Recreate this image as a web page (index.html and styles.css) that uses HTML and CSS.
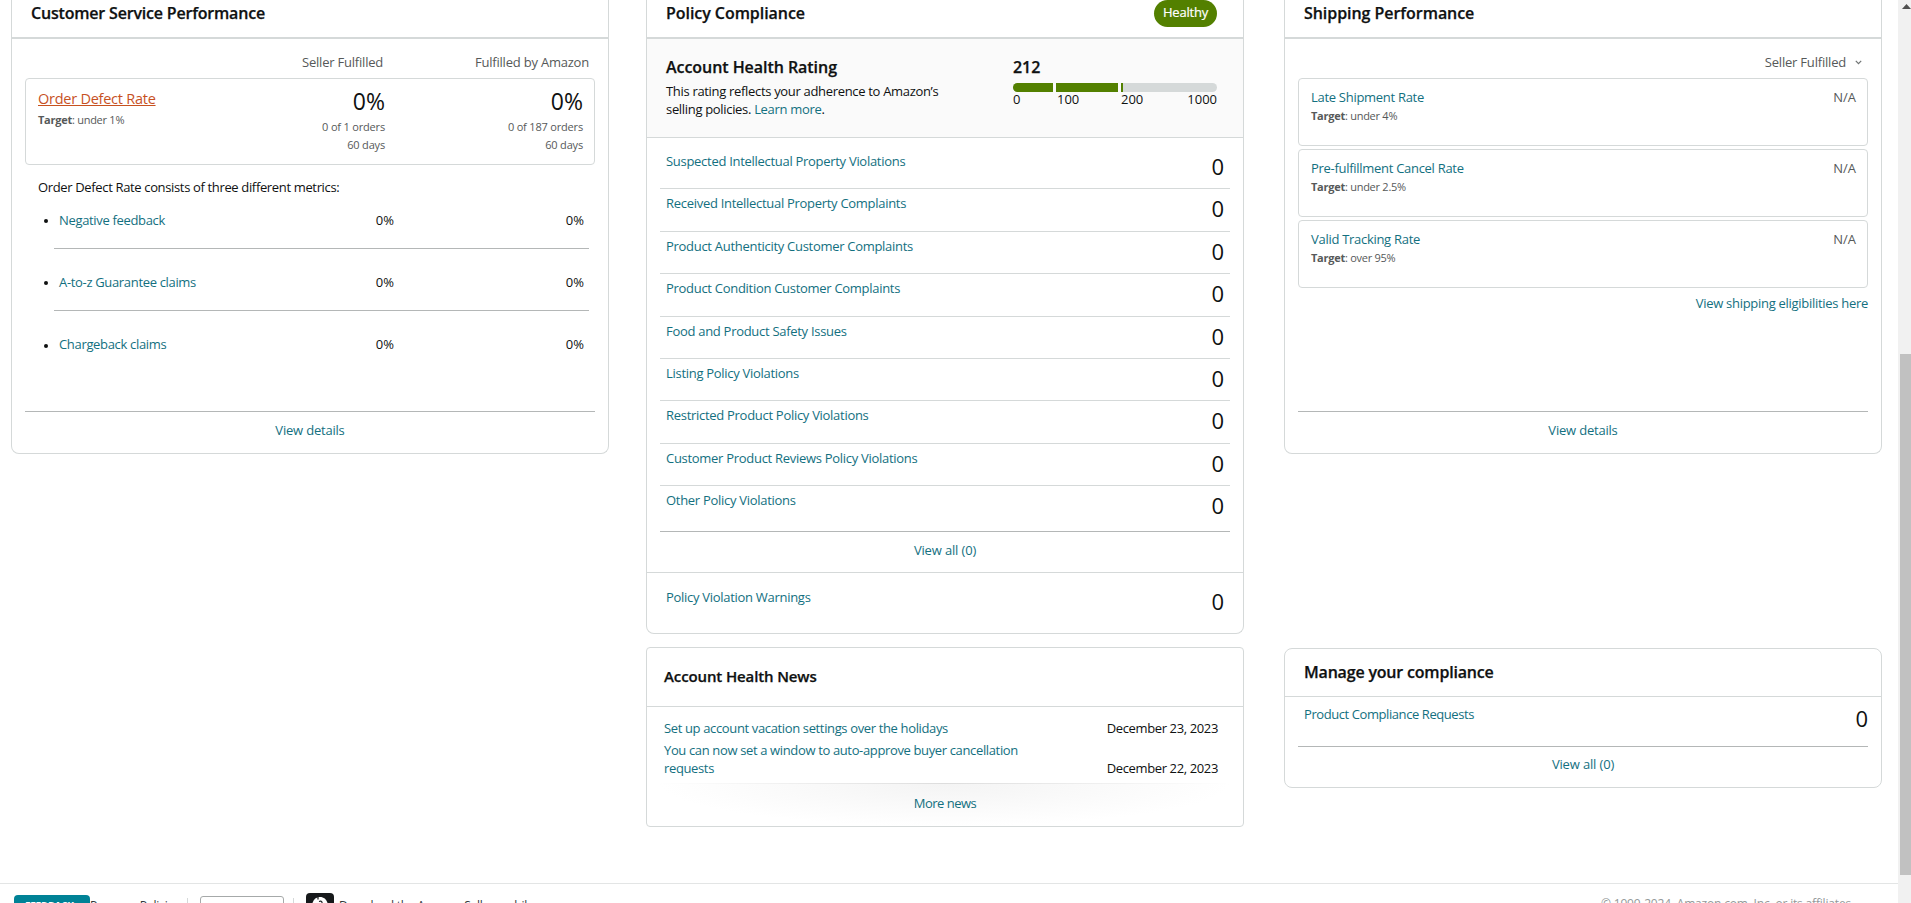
FILE: index.html
```html
<!DOCTYPE html>
<html lang="en">
<head>
<meta charset="utf-8">
<title>Account Health</title>
<link rel="stylesheet" href="styles.css">
</head>
<body>
<div class="page">
<main class="columns">
  <section class="column">
    <article class="card service">
      <header class="card-head"><h2>Customer Service Performance</h2></header>
      <div class="service-cols"><span></span><span>Seller Fulfilled</span><span>Fulfilled by Amazon</span></div>
      <div class="odr">
        <div class="odr-name"><a class="odr-link">Order Defect Rate</a><p class="target"><b>Target</b>: under 1%</p></div>
        <div class="odr-val"><strong>0%</strong><span>0 of 1 orders</span><span>60 days</span></div>
        <div class="odr-val"><strong>0%</strong><span>0 of 187 orders</span><span>60 days</span></div>
      </div>
      <p class="odr-note">Order Defect Rate consists of three different metrics:</p>
      <ul class="metrics">
        <li><a>Negative feedback</a><span>0%</span><span>0%</span></li>
        <li><a>A-to-z Guarantee claims</a><span>0%</span><span>0%</span></li>
        <li><a>Chargeback claims</a><span>0%</span><span>0%</span></li>
      </ul>
      <footer class="card-foot"><a>View details</a></footer>
    </article>
  </section>

  <section class="column">
    <article class="card policy">
      <header class="card-head"><h2>Policy Compliance</h2><span class="badge">Healthy</span></header>
      <div class="rating">
        <div class="rating-text">
          <h3>Account Health Rating</h3>
          <p>This rating reflects your adherence to Amazon’s<br>selling policies. <a>Learn more</a>.</p>
        </div>
        <div class="rating-score">
          <h3>212</h3>
          <div class="bar"><i class="seg-a"></i><i class="seg-b"></i><i class="seg-c"></i></div>
          <div class="scale"><span>0</span><span>100</span><span>200</span><span>1000</span></div>
        </div>
      </div>
      <ul class="violations">
        <li><a>Suspected Intellectual Property Violations</a><span>0</span></li>
        <li><a>Received Intellectual Property Complaints</a><span>0</span></li>
        <li><a>Product Authenticity Customer Complaints</a><span>0</span></li>
        <li><a>Product Condition Customer Complaints</a><span>0</span></li>
        <li><a>Food and Product Safety Issues</a><span>0</span></li>
        <li><a>Listing Policy Violations</a><span>0</span></li>
        <li><a>Restricted Product Policy Violations</a><span>0</span></li>
        <li><a>Customer Product Reviews Policy Violations</a><span>0</span></li>
        <li><a>Other Policy Violations</a><span>0</span></li>
      </ul>
      <div class="view-all"><a>View all (0)</a></div>
      <div class="warnings"><a>Policy Violation Warnings</a><span>0</span></div>
    </article>
    <article class="card news">
      <header><h2>Account Health News</h2></header>
      <div class="news-list">
        <a>Set up account vacation settings over the holidays</a><time>December 23, 2023</time>
        <a>You can now set a window to auto-approve buyer cancellation<br>requests</a><time>December 22, 2023</time>
      </div>
      <footer><a>More news</a></footer>
    </article>
  </section>

  <section class="column">
    <article class="card shipping">
      <header class="card-head"><h2>Shipping Performance</h2></header>
      <div class="picker">Seller Fulfilled<svg width="7" height="5" viewBox="0 0 7 5"><path d="M.8.8 3.5 3.6 6.2.8" fill="none" stroke="#6f7373" stroke-width="1.2"/></svg></div>
      <div class="rates">
        <div class="rate"><div><a>Late Shipment Rate</a><p class="target"><b>Target</b>: under 4%</p></div><span>N/A</span></div>
        <div class="rate"><div><a>Pre-fulfillment Cancel Rate</a><p class="target"><b>Target</b>: under 2.5%</p></div><span>N/A</span></div>
        <div class="rate"><div><a>Valid Tracking Rate</a><p class="target"><b>Target</b>: over 95%</p></div><span>N/A</span></div>
      </div>
      <p class="eligibility"><a>View shipping eligibilities here</a></p>
      <footer class="card-foot"><a>View details</a></footer>
    </article>
    <article class="card manage">
      <header><h2>Manage your compliance</h2></header>
      <div class="request"><a>Product Compliance Requests</a><span>0</span></div>
      <footer><a>View all (0)</a></footer>
    </article>
  </section>
</main>

<footer class="site-foot">
  <span class="feedback">FEEDBACK <small>»</small></span>
  <span class="programs">Program Policies</span>
  <i class="divider"></i>
  <span class="language"></span>
  <i class="divider"></i>
  <svg class="app-icon" width="28" height="28" viewBox="0 0 28 28"><rect width="28" height="28" rx="4" fill="#16191b"/><path d="M6 14c0-6 3-10 8-10s8 4 8 10z" fill="#fff"/><path d="M12 2.500v4M13 8.500q3-1 3 1v4" stroke="#16191b" stroke-width="1.200" fill="none"/></svg>
  <span class="download">Download the Amazon Seller mobile app</span>
  <span class="copyright">© 1999-2024, Amazon.com, Inc. or its affiliates</span>
</footer>
</div>
<div class="scrollbar"><svg width="9" height="5" viewBox="0 0 9 5"><path d="M4.500 0 9 5H0z" fill="#505050"/></svg><i></i></div>
</body>
</html>
```
FILE: styles.css
```css
* { box-sizing: border-box; }
html, body { margin: 0; height: 903px; overflow: hidden; }
body {
  display: flex;
  background: #fff;
  color: #0f1111;
  font: 13px/18px "Open Sans", "Noto Sans", sans-serif;
  letter-spacing: -0.29px;
}
h2, h3, p, ul { margin: 0; padding: 0; }
ul { list-style: none; }
h2, h3 { font-size: 16px; line-height: 22px; font-weight: 600; letter-spacing: -0.05px; -webkit-text-stroke: 0.25px #0f1111; }
.service h2, .manage h2 { letter-spacing: -0.19px; }
a { color: #13707f; }
.page { flex: 1; height: 903px; overflow: hidden; }
.columns { display: flex; gap: 37px; padding-left: 11px; height: 883px; }
.columns .column:last-child { margin-left: 3px; }
.column { width: 598px; }
.card { border: 1px solid #d5d9d9; border-radius: 8px; display: flex; flex-direction: column; }
.service, .shipping, .policy { border-top: 0; border-radius: 0 0 8px 8px; }
.service, .shipping { height: 454px; }
.card-head { height: 39px; border-bottom: 2px solid #d5d9d9; padding: 2px 26px 0 19px; display: flex; justify-content: space-between; flex: none; }
.badge { background: #538000; color: #fff; border-radius: 14px; width: 63px; height: 27px; margin-top: -2px; line-height: 25px; text-align: center; letter-spacing: -0.2px; -webkit-text-stroke: 0.2px #fff; }

.service-cols { display: grid; grid-template-columns: 290px 81px 1fr; padding: 14px 19px 0 0; height: 39px; color: #565959; text-align: right; letter-spacing: -0.21px; }
.service-cols span { white-space: nowrap; }
.odr { margin: 0 13px; height: 87px; border: 1px solid #d5d9d9; border-radius: 4px; display: grid; grid-template-columns: 1fr 120px 198px; padding: 11px 11px 0 12px; }
.odr-link { color: #c7511f; font-size: 14.500px; text-decoration: underline; line-height: 18px; display: block; letter-spacing: -0.25px; }
.target { font-size: 11px; line-height: 16px; color: #565959; letter-spacing: -0.26px; }
.odr-name .target { margin-top: 4px; }
.odr-val { display: flex; flex-direction: column; text-align: right; font-size: 11px; letter-spacing: -0.18px; color: #565959; }
.odr-val strong { font-size: 23px; line-height: 25px; font-weight: 400; color: #0f1111; margin: -1px 0 4px; letter-spacing: 0; }
.odr-note { padding: 13px 0 0 26px; letter-spacing: -0.35px; }
.metrics { margin: 4px 19px 0 42px; }
.metrics li { height: 62px; padding: 24px 5px 0; display: grid; grid-template-columns: 1fr 80px 190px; text-align: right; border-bottom: 1px solid #b4b7b7; position: relative; }
.metrics li:first-child { height: 49px; padding-top: 11px; }
.metrics li:last-child { border: 0; }
.metrics a { text-align: left; letter-spacing: -0.33px; }
.metrics span { letter-spacing: 0; }
.metrics li::before { content: ""; position: absolute; left: -10px; bottom: 25px; width: 4px; height: 4px; border-radius: 50%; background: #0f1111; }
.card-foot { margin: auto 13px 0; height: 42px; border-top: 1px solid #b4b7b7; text-align: center; padding-top: 9px; letter-spacing: -0.2px; }

.policy { height: 634px; }
.rating { height: 99px; flex: none; background: #fafafa; border-bottom: 1px solid #d5d9d9; display: flex; justify-content: space-between; padding: 17px 26px 0 19px; }
.rating-text p { margin-top: 4px; letter-spacing: -0.32px; }
.rating-score { width: 204px; }
.bar { margin-top: 5px; height: 9px; border-radius: 5px; overflow: hidden; background: #d5d9d9; display: flex; }
.bar i { background: #538000; border-right: 3px solid #fafafa; }
.seg-a { width: 43px; }
.seg-b { width: 65px; }
.bar .seg-c { width: 2px; border: 0; }
.scale { display: grid; grid-template-columns: 44px 64px 34px 1fr; line-height: 15px; letter-spacing: 0; }
.scale span:last-child { text-align: right; }
.violations { margin: 9px 13px 0; }
.violations li { height: 42.400px; border-bottom: 1px solid #d5d9d9; padding: 5px 6px 0; display: flex; justify-content: space-between; }
.violations li:last-child { border: 0; height: 45px; }
.violations span, .warnings span, .request span { font-size: 22px; line-height: 28px; letter-spacing: 0; }
.warnings span, .request span { line-height: 27px; }
.view-all { margin: 0 13px; height: 41px; border-top: 1px solid #b4b7b7; padding-top: 9px; text-align: center; letter-spacing: -0.15px; }
.warnings { border-top: 1px solid #d5d9d9; padding: 15px 19px 0; display: flex; justify-content: space-between; }

.news { margin-top: 13px; height: 180px; border-radius: 4px; }
.news header { height: 59px; border-bottom: 1px solid #d5d9d9; padding: 17px 17px 0; }
.news h2 { font-size: 15px; letter-spacing: -0.12px; }
.news-list { display: grid; grid-template-columns: 1fr auto; align-items: end; row-gap: 4px; padding: 12px 25px 0 17px; height: 76px; align-content: start; letter-spacing: -0.36px; }
.news-list time { letter-spacing: -0.37px; }
.news footer { flex: 1; margin: 0 13px; padding-top: 10px; text-align: center; background: radial-gradient(ellipse 50% 100% at 50% 0, #f4f4f4, #fff); border-top: 1px solid #e7e7e7; border-image: linear-gradient(90deg, #fff, #ddd, #fff) 1; letter-spacing: -0.5px; }

.picker { height: 39px; padding: 14px 19px 0 0; color: #565959; text-align: right; letter-spacing: -0.2px; }
.picker svg { margin: 0 0 2px 9px; }
.rates { display: grid; gap: 3px; margin: 0 13px; }
.rate { height: 68px; border: 1px solid #d5d9d9; border-radius: 4px; display: flex; justify-content: space-between; padding: 9px 11px 0 12px; color: #565959; }
.rate span { letter-spacing: 0; }
.rate .target { margin-top: 2px; }
.eligibility { text-align: right; padding: 6px 13px 0 0; }
.manage { margin-top: 194px; height: 140px; }
.manage header { height: 48px; border-bottom: 1px solid #d5d9d9; padding: 12px 19px 0; }
.request { height: 49px; padding: 8px 13px 0 19px; display: flex; justify-content: space-between; letter-spacing: -0.42px; }
.manage footer { margin: 0 13px; border-top: 1px solid #b4b7b7; text-align: center; padding-top: 8px; letter-spacing: -0.15px; }

.site-foot { height: 20px; border-top: 1px solid #e3e5e5; display: flex; overflow: hidden; white-space: nowrap; color: #33383b; align-items: flex-start; font-size: 12px; letter-spacing: -0.25px; }
.site-foot > * { flex: none; }
.feedback { margin: 11px 0 0 14px; width: 76px; height: 30px; background: #008296; color: #fff; border-radius: 4px; font-size: 10px; font-weight: 700; padding: 2px 0 0 11px; }
.programs { margin-top: 13px; width: 97px; }
.divider { width: 1px; height: 20px; margin-top: 14px; background: #d5d9d9; }
.language { margin: 12px 9px 0 12px; width: 84px; height: 24px; border: 1px solid #a6a9a9; border-radius: 3px; }
.app-icon { margin: 9px 5px 0 12px; }
.download { margin-top: 13px; }
.copyright { margin: 11px 47px 0 auto; color: #949999; letter-spacing: -0.18px; }

.scrollbar { width: 13px; height: 903px; background: #f1f1f1; display: flex; flex-direction: column; padding-left: 2px; }
.scrollbar svg { margin: 4px 0 0 2px; }
.scrollbar i { margin-top: 345px; height: 521px; background: #c1c1c1; }
```
